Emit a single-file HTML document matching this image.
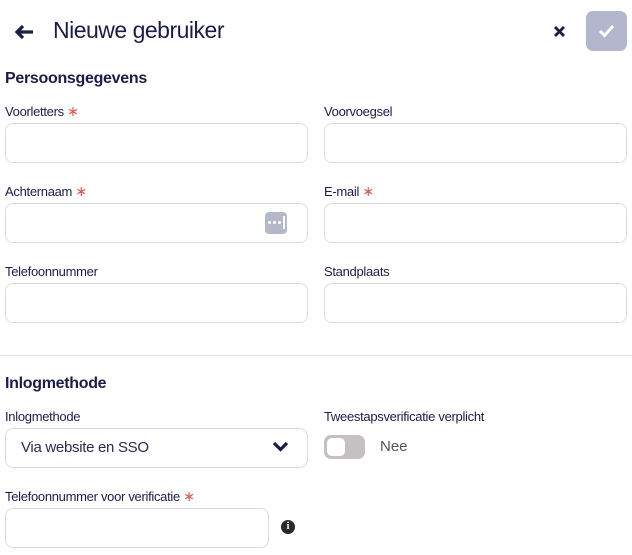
<!DOCTYPE html>
<html><head><style>
*{box-sizing:border-box;margin:0;padding:0}
body{width:632px;height:555px;background:#fff;font-family:"Liberation Sans",sans-serif;color:#1c1c4a;position:relative;overflow:hidden}
.a{position:absolute}
.lbl{position:absolute;font-size:13px;line-height:16px;color:#1c1c4a;letter-spacing:-0.3px}
.req{color:#e05050;font-size:14px;line-height:0}
.inp{position:absolute;height:40px;border:1px solid #dcdce0;border-radius:8px;background:#fff}
h2{position:absolute;font-size:16px;font-weight:bold;color:#1c1c4a;letter-spacing:-0.3px}
</style></head><body>
<svg class="a" style="left:15px;top:24px" width="20" height="16" viewBox="0 0 20 16"><path d="M2 8H18M8 2L2 8L8 14" stroke="#1c1c4a" stroke-width="3.2" fill="none" stroke-linejoin="miter"/></svg>
<div class="a" style="left:53px;top:17px;font-size:23px;letter-spacing:-0.5px">Nieuwe gebruiker</div>
<svg class="a" style="left:553px;top:25px" width="13" height="13" viewBox="0 0 13 13"><path d="M2 2L11 11M11 2L2 11" stroke="#1c1c4a" stroke-width="2.8"/></svg>
<div class="a" style="left:586px;top:11px;width:41px;height:40px;border-radius:7px;background:#b4b6cd"></div>
<svg class="a" style="left:598px;top:24px" width="17" height="14" viewBox="0 0 17 14"><path d="M2 7L6.5 11.5L15 2" stroke="#fff" stroke-width="3" fill="none"/></svg>
<h2 style="left:5px;top:70px">Persoonsgegevens</h2>
<div class="lbl" style="left:5px;top:104px">Voorletters <span class="req">∗</span></div>
<div class="lbl" style="left:324px;top:104px">Voorvoegsel</div>
<div class="inp" style="left:5px;top:123px;width:303px"></div>
<div class="inp" style="left:324px;top:123px;width:303px"></div>
<div class="lbl" style="left:5px;top:184px">Achternaam <span class="req">∗</span></div>
<div class="lbl" style="left:324px;top:184px">E-mail <span class="req">∗</span></div>
<div class="inp" style="left:5px;top:203px;width:303px"></div>
<div class="a" style="left:265px;top:212px;width:22px;height:22px;border-radius:4px;background:#b4b8c8"></div>
<div class="a" style="left:268px;top:221px;width:3px;height:3px;border-radius:50%;background:#fff"></div>
<div class="a" style="left:273px;top:221px;width:3px;height:3px;border-radius:50%;background:#fff"></div>
<div class="a" style="left:278px;top:221px;width:3px;height:3px;border-radius:50%;background:#fff"></div>
<div class="a" style="left:283px;top:216px;width:2px;height:13px;background:#fff"></div>
<div class="inp" style="left:324px;top:203px;width:303px"></div>
<div class="lbl" style="left:5px;top:264px">Telefoonnummer</div>
<div class="lbl" style="left:324px;top:264px">Standplaats</div>
<div class="inp" style="left:5px;top:283px;width:303px"></div>
<div class="inp" style="left:324px;top:283px;width:303px"></div>
<div class="a" style="left:0;top:355px;width:632px;height:1px;background:#e2e2e6"></div>
<h2 style="left:5px;top:375px">Inlogmethode</h2>
<div class="lbl" style="left:5px;top:409px">Inlogmethode</div>
<div class="lbl" style="left:324px;top:409px">Tweestapsverificatie verplicht</div>
<div class="inp" style="left:5px;top:428px;width:303px"></div>
<div class="a" style="left:21px;top:439px;font-size:15px;color:#2a2a50;letter-spacing:-0.3px">Via website en SSO</div>
<svg class="a" style="left:272px;top:441px" width="17" height="12" viewBox="0 0 17 12"><path d="M2 2L8.5 8.5L15 2" stroke="#1c1c4a" stroke-width="3.2" fill="none"/></svg>
<div class="a" style="left:324px;top:435px;width:41px;height:24px;border-radius:7px;background:#c4c0c4"></div>
<div class="a" style="left:327px;top:438px;width:18px;height:18px;border-radius:5px;background:#fff"></div>
<div class="a" style="left:380px;top:438px;font-size:15px;color:#555">Nee</div>
<div class="lbl" style="left:5px;top:489px">Telefoonnummer voor verificatie <span class="req">∗</span></div>
<div class="inp" style="left:5px;top:508px;width:264px"></div>
<div class="a" style="left:281px;top:520px;width:14px;height:14px;border-radius:50%;background:#2a2a2a;color:#fff;font-size:10px;font-weight:bold;text-align:center;line-height:14px;font-family:'Liberation Serif',serif">i</div>
</body></html>
